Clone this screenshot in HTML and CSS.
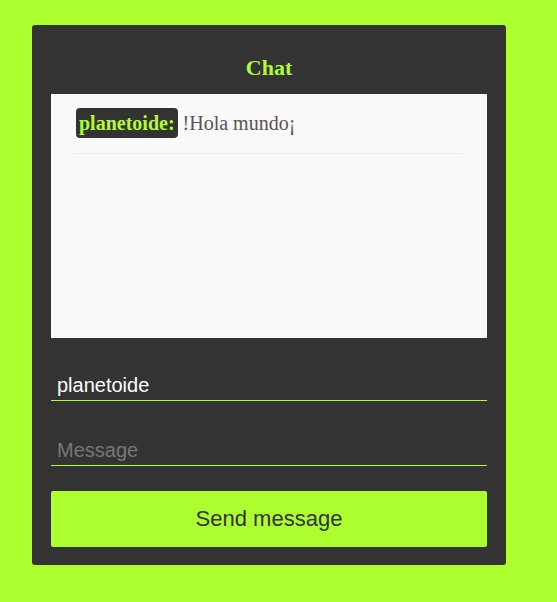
FILE: index.html
```html
<!DOCTYPE html>
<html>
<head>
<meta charset="utf-8">
<link rel="stylesheet" href="styles.css">
</head>
<body>
<div class="card">
  <h2 class="title">Chat</h2>
  <div class="chat-box">
    <ul class="messages">
      <li class="message"><span class="author">planetoide:</span> <span class="text">!Hola mundo¡</span></li>
    </ul>
  </div>
  <input class="field field-name" type="text" value="planetoide">
  <input class="field field-message" type="text" placeholder="Message">
  <button class="send">Send message</button>
</div>
</body>
</html>
```

FILE: styles.css
```css
html, body {
  margin: 0;
  padding: 0;
}
body {
  background: #adff2f;
  width: 557px;
  height: 602px;
  padding: 25px 0 0 32px;
  box-sizing: border-box;
}
.card {
  width: 474px;
  box-sizing: border-box;
  background: #333333;
  border-radius: 3px;
  padding: 0 19px 18px 19px;
  display: flex;
  flex-direction: column;
}
.title {
  margin: 30px 0 14px 0;
  font-family: "Liberation Serif", serif;
  font-size: 22px;
  font-weight: bold;
  line-height: 25px;
  color: #adff2f;
  text-align: center;
}
.chat-box {
  background: #f9f9f9;
  height: 244px;
}
.messages {
  list-style: none;
  margin: 0;
  padding: 14px 24px 0 23px;
}
.message {
  padding: 0 0 15px 2px;
  border-bottom: 1px solid #eeeeee;
  font-family: "Liberation Serif", serif;
  font-size: 20px;
  line-height: 30px;
  height: 30px;
  display: flex;
  align-items: center;
  gap: 5px;
}
.author {
  background: #333333;
  color: #adff2f;
  font-weight: bold;
  border-radius: 4px;
  padding: 0 3px;
  height: 30px;
  line-height: 30px;
}
.text {
  color: #555555;
}
.field {
  display: block;
  background: transparent;
  border: none;
  border-bottom: 1px solid #adff2f;
  outline: none;
  font-family: "Liberation Sans", Arial, sans-serif;
  font-size: 20px;
  line-height: 23px;
  height: 23px;
  color: #ffffff;
  padding: 3px 6px;
  margin: 0;
  width: 424px;
  box-sizing: content-box;
}
.field-name {
  margin-top: 33px;
}
.field-message {
  margin-top: 35px;
}
.field::placeholder {
  color: #777777;
}
.send {
  margin-top: 25px;
  height: 56px;
  background: #adff2f;
  border: none;
  border-radius: 2px;
  font-family: "Liberation Sans", Arial, sans-serif;
  font-size: 22px;
  color: #333333;
  padding: 0;
}
```
